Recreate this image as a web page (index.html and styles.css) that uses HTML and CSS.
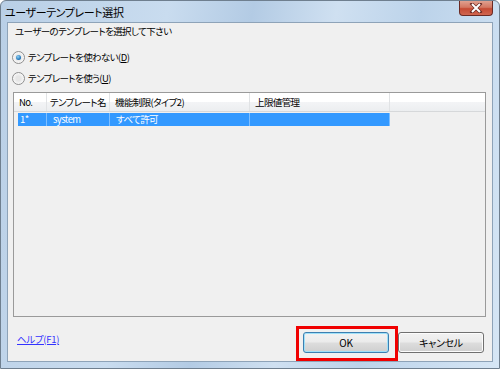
FILE: index.html
```html
<!DOCTYPE html>
<html lang="ja">
<head>
    <meta charset="UTF-8">
    <title>ユーザーテンプレート選択</title>
    <link rel="stylesheet" href="styles.css">
</head>
<body>
    <div class="window">
        <div class="title-bar">
            <span class="title">ユーザーテンプレート選択</span>
            <div class="close-btn">
                <svg width="14" height="10" viewBox="0 0 14 10">
                    <path d="M3 1 L11 9 M11 1 L3 9" stroke="#6b2a24" stroke-width="3.4" stroke-linecap="square"/>
                    <path d="M3 1 L11 9 M11 1 L3 9" stroke="#fff" stroke-width="2"/>
                </svg>
            </div>
        </div>

        <div class="client">
            <div class="prompt">ユーザーのテンプレートを選択して下さい</div>

            <div class="options">
                <label class="radio-row">
                    <span class="radio checked"></span>
                    <span>テンプレートを使わない(<u>D</u>)</span>
                </label>
                <label class="radio-row">
                    <span class="radio"></span>
                    <span>テンプレートを使う(<u>U</u>)</span>
                </label>
            </div>

            <div class="list-view">
                <div class="list-header">
                    <div class="col c-no">No.</div>
                    <div class="col c-name">テンプレート名</div>
                    <div class="col c-func">機能制限(タイプ2)</div>
                    <div class="col c-limit">上限値管理</div>
                    <div class="col c-fill"></div>
                </div>
                <div class="list-row selected">
                    <div class="col c-no">1*</div>
                    <div class="col c-name">system</div>
                    <div class="col c-func">すべて許可</div>
                    <div class="col c-limit"></div>
                </div>
            </div>

            <div class="footer">
                <a class="help-link" href="#">ヘルプ(F1)</a>
                <div class="buttons">
                    <div class="highlight">
                        <button class="btn default">OK</button>
                    </div>
                    <button class="btn">キャンセル</button>
                </div>
            </div>
        </div>
    </div>
</body>
</html>
```

FILE: styles.css
```css
body {
    margin: 0;
    background-color: #fff;
    font-family: "Noto Sans CJK JP", "Noto Sans", sans-serif;
    font-feature-settings: "palt";
}

.window {
    width: 500px;
    height: 369px;
    box-sizing: border-box;
    display: flex;
    flex-direction: column;
    border: 1px solid #6f7f8f;
    border-radius: 6px 6px 0 0;
    background: linear-gradient(100deg, #b9cfe6 0%, #c9dcef 30%, #b3cbe4 45%, #cfe0f1 60%, #bcd3ea 75%, #d6e6f5 100%);
}

.title-bar {
    height: 21px;
    display: flex;
    align-items: flex-start;
    padding-left: 4px;
}

.title {
    font-size: 11px;
    color: #000;
    margin-top: 3px;
    letter-spacing: -0.4px;
}

.close-btn {
    margin-left: auto;
    margin-right: 6px;
    width: 34px;
    height: 15px;
    box-sizing: border-box;
    border: 1px solid #6b2a24;
    border-top: none;
    border-radius: 0 0 4px 4px;
    background: linear-gradient(#e0a08f 0%, #d37762 45%, #c54a33 55%, #d06650 100%);
    display: flex;
    align-items: center;
    justify-content: center;
}

.client {
    flex: 1;
    margin: 1px 6px 6px 6px;
    background-color: #f0f0f0;
    border: 1px solid #8ea3b8;
    display: flex;
    flex-direction: column;
    font-size: 9.5px;
    letter-spacing: -0.6px;
    color: #000;
}

.prompt {
    margin: 1px 0 0 7px;
    height: 14px;
    line-height: 14px;
}

.options {
    margin-top: 12px;
    display: flex;
    flex-direction: column;
    gap: 7px;
}

.radio-row {
    display: flex;
    align-items: center;
    gap: 3px;
    margin-left: 4px;
    height: 14px;
}

.radio {
    width: 11px;
    height: 11px;
    border: 1px solid #8f8f8f;
    border-radius: 50%;
    background: radial-gradient(circle, #e6e6e6 30%, #f8f8f8 70%);
    position: relative;
}

.radio.checked::after {
    content: "";
    position: absolute;
    left: 3px;
    top: 3px;
    width: 5px;
    height: 5px;
    border-radius: 50%;
    background: radial-gradient(circle at 40% 35%, #8fd1f5, #1a6fb5 70%);
}

.list-view {
    margin: 7px 6px 0 5px;
    height: 223px;
    border: 1px solid #9a9a9a;
    background-color: #f0f0f0;
}

.list-header {
    display: flex;
    height: 18px;
    background: linear-gradient(#ffffff 0%, #ffffff 50%, #f3f4f6 51%, #eceef0 100%);
    border-bottom: 1px solid #d6d8da;
}

.list-header .col {
    border-right: 1px solid #e1e3e5;
    padding-left: 5px;
    line-height: 18px;
    overflow: hidden;
}

.list-header .c-name {
    padding-left: 3px;
}

.col {
    box-sizing: border-box;
    white-space: nowrap;
}

.c-no { width: 33px; }
.c-name { width: 63px; }
.c-func { width: 140px; }
.c-limit { width: 140px; }
.c-fill { flex: 1; border-right: none !important; }

.list-row {
    display: flex;
    height: 13px;
    line-height: 13px;
    margin-top: 1px;
}

.list-row.selected {
    margin-left: 4px;
}

.list-row.selected .col {
    background-color: #3399ff;
    color: #fff;
    padding-left: 2px;
    border-right: 1px solid #7fbfff;
}

.list-row.selected .c-no {
    width: 29px;
}

.list-row.selected .c-name,
.list-row.selected .c-func {
    padding-left: 6px;
}

.footer {
    flex: 1;
    display: flex;
    align-items: flex-start;
    justify-content: space-between;
}

.help-link {
    margin: 15px 0 0 9px;
    color: #3333ff;
    text-decoration: underline;
    font-size: 9.5px;
    letter-spacing: -0.3px;
}

.buttons {
    display: flex;
    align-items: flex-start;
    margin: 9px 8px 0 0;
}

.highlight {
    border: 3px solid #f00000;
    padding: 3px 6px 5px 4px;
}

.btn {
    width: 86px;
    height: 21px;
    font-family: "Noto Sans CJK JP", "Noto Sans", sans-serif;
    font-feature-settings: "palt";
    font-size: 10px;
    letter-spacing: -0.3px;
    color: #000;
    border: 1px solid #707070;
    border-radius: 3px;
    background: linear-gradient(#f2f2f2 0%, #ebebeb 48%, #dddddd 52%, #cfcfcf 100%);
    box-shadow: inset 0 0 0 1px #fcfcfc;
    padding: 0;
    margin-top: 6px;
}

.highlight .btn {
    margin-top: 0;
}

.btn.default {
    border-color: #3c7fb1;
    box-shadow: inset 0 0 0 1px #9fe0f8;
}
```
